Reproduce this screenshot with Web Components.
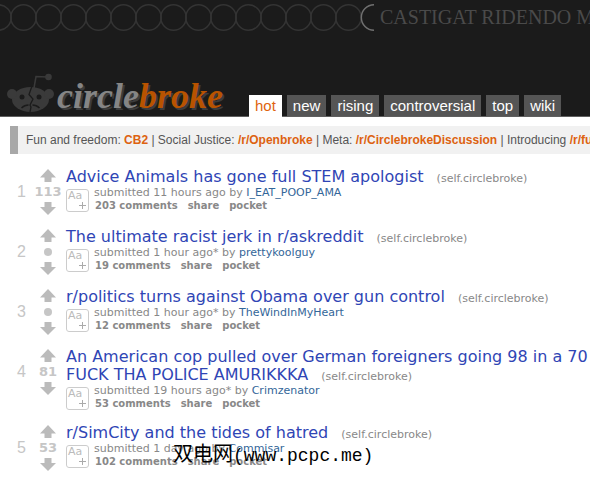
<!DOCTYPE html>
<html lang="en">
<head>
<meta charset="utf-8">
<title>circlebroke</title>
<style>
  body {
    margin: 0;
    background: #fff;
    font-family: "DejaVu Sans", Verdana, sans-serif;
  }
  main {
    position: relative;
    overflow: hidden;
  }
  cb-post:last-of-type { margin-bottom: 0; }
</style>
</head>
<body>
<cb-header>
  <cb-tab selected>hot</cb-tab>
  <cb-tab>new</cb-tab>
  <cb-tab>rising</cb-tab>
  <cb-tab>controversial</cb-tab>
  <cb-tab>top</cb-tab>
  <cb-tab>wiki</cb-tab>
</cb-header>
<main>
  <cb-notice></cb-notice>
  <cb-post rank="1" score="113" age="11 hours ago" author="I_EAT_POOP_AMA" comments="203">Advice Animals has gone full STEM apologist</cb-post>
  <cb-post rank="2" age="1 hour ago*" author="prettykoolguy" comments="19">The ultimate racist jerk in r/askreddit</cb-post>
  <cb-post rank="3" age="1 hour ago*" author="TheWindInMyHeart" comments="12">r/politics turns against Obama over gun control</cb-post>
  <cb-post rank="4" score="81" age="19 hours ago*" author="Crimzenator" comments="53">An American cop pulled over German foreigners going 98 in a 70<br>FUCK THA POLICE AMURIKKKA</cb-post>
  <cb-post rank="5" score="53" age="1 day ago" author="Commisar" comments="102">r/SimCity and the tides of hatred</cb-post>
  <cb-watermark></cb-watermark>
</main>

<script>
// page header: ring banner, logo and the tab menu (tabs come in through the slot)
class CbHeader extends HTMLElement {
  constructor() {
    super();
    this.attachShadow({ mode: 'open' });
    let rings = '';
    for (let cx = -1.5; cx < 360; cx += 25) {
      rings += `<circle cx="${cx}" cy="17.5" r="12.7"/>`;
    }
    this.shadowRoot.innerHTML = `
      <style>
        :host {
          display: block;
          background: #1b1b1b;
          border-bottom: 1px solid #5f5f5f;
        }
        .banner {
          display: flex;
          gap: 6px;
          height: 36px;
          white-space: nowrap;
          overflow: hidden;
          color: #4a4a4a;
          font: 20px/34px "Liberation Serif", serif;
        }
        .banner svg { flex: none; }
        .bar {
          display: flex;
          align-items: flex-end;
          height: 80px;
        }
        .logo {
          display: flex;
          align-items: flex-end;
          flex: none;
          width: 242px;
          padding-left: 7px;
          gap: 2px;
          text-decoration: none;
          color: #858585;
          font: italic bold 36px/40px "Liberation Serif", serif;
          text-shadow: 2px 2px #3c3c3c;
        }
        .logo svg { flex: none; margin-bottom: 3px; }
        .logo b { color: #b85300; }
        nav {
          display: flex;
          gap: 5px;
          margin-bottom: -1px;
        }
      </style>
      <div class="banner">
        <svg width="374" height="36" fill="none" stroke="#343434" stroke-width="1.5">
          ${rings}
          <path d="M374 4.8a12.7 12.7 0 0 0 0 25.4" stroke="#707070"/>
        </svg>
        <span>CASTIGAT RIDENDO M</span>
      </div>
      <div class="bar">
        <a class="logo" href="#">
          <svg width="48" height="40" viewBox="0 0 48 40" aria-hidden="true">
            <g fill="#3a3a3a">
              <ellipse cx="23.5" cy="26.5" rx="18.5" ry="12.5"/>
              <circle cx="5" cy="21" r="5"/>
              <circle cx="42" cy="21" r="5"/>
              <circle cx="41.5" cy="4" r="3.3"/>
            </g>
            <path d="M27 15L29 3.5L41 4" fill="none" stroke="#3a3a3a" stroke-width="1.5"/>
            <path d="M25 13l-3 8.500 4 4.500-3 6 1 2-1 5" fill="none" stroke="#1b1b1b" stroke-width="1.3"/>
            <circle cx="15" cy="24" r="2.5" fill="#1b1b1b"/>
            <circle cx="32" cy="24" r="2.5" fill="#1b1b1b"/>
            <path d="M14.5 35q3-3 7-3M25.5 32q4 0 7 3" fill="none" stroke="#1b1b1b" stroke-width="1.5"/>
          </svg>
          <span>circle<b>broke</b></span>
        </a>
        <nav><slot></slot></nav>
      </div>
    `;
  }
}

class CbTab extends HTMLElement {
  constructor() {
    super();
    this.attachShadow({ mode: 'open' });
    this.shadowRoot.innerHTML = `
      <style>
        :host { display: block; padding-bottom: 1px; }
        :host([selected]) { padding-bottom: 0; }
        a {
          display: block;
          padding: 0 6px;
          background: #555;
          color: #fff;
          font: 15px/21px "Liberation Sans", Arial, sans-serif;
          text-decoration: none;
        }
        :host([selected]) a {
          background: #fff;
          color: #e0640f;
          line-height: 22px;
        }
      </style>
      <a href="#"><slot></slot></a>
    `;
  }
}

class CbNotice extends HTMLElement {
  constructor() {
    super();
    this.attachShadow({ mode: 'open' });
    this.shadowRoot.innerHTML = `
      <style>
        :host {
          display: block;
          margin: 9px 0 13px 10px;
          padding-left: 8px;
          border-left: 8px solid #a8a8a8;
          background: #f1f1f1;
          color: #555;
          font: 12px/28px "Liberation Sans", Arial, sans-serif;
          white-space: nowrap;
          overflow: hidden;
        }
        a {
          color: #dd6210;
          font-weight: bold;
          text-decoration: none;
        }
      </style>
      Fun and freedom: <a href="#">CB2</a> | Social Justice: <a href="#">/r/Openbroke</a> | Meta: <a href="#">/r/CirclebrokeDiscussion</a> | Introducing <a href="#">/r/fu</a>
    `;
  }
}

// one row of the listing, the title is the slotted content
class CbPost extends HTMLElement {
  constructor() {
    super();
    this.attachShadow({ mode: 'open' });
  }

  connectedCallback() {
    const score = this.getAttribute('score');
    this.shadowRoot.innerHTML = `
      <style>
        :host {
          display: flex;
          margin-bottom: 10px;
          color: #888;
          white-space: nowrap;
        }
        a { color: inherit; text-decoration: none; }
        .rank {
          flex: none;
          width: 26px;
          text-align: right;
          color: #c6c6c6;
          font: 16px/50px "Liberation Sans", Arial, sans-serif;
        }
        .votes {
          display: flex;
          flex-direction: column;
          align-items: center;
          flex: none;
          width: 36px;
          padding: 2px 0 0 4px;
          color: #c6c6c6;
          font: bold 13px/18px "DejaVu Sans", Verdana, sans-serif;
        }
        button {
          display: block;
          padding: 0;
          border: 0;
          background: none;
        }
        button svg { display: block; }
        .dot {
          width: 8px;
          height: 8px;
          margin: 5px 0;
          border-radius: 50%;
          background: #c6c6c6;
        }
        .entry { padding: 1px 0 3px; }
        .title {
          color: #2f45b5;
          font-size: 16px;
          line-height: 18px;
        }
        .title .domain {
          margin-left: 8px;
          color: #888;
          font-size: 11px;
          line-height: 12px;
        }
        .details { display: flex; gap: 5px; }
        .expando { margin-top: 2px; }
        .tagline { font-size: 11px; line-height: 14px; }
        .tagline a { color: #369; }
        .links {
          display: flex;
          gap: 10px;
          padding-left: 1px;
          font-size: 10px;
          line-height: 12px;
          font-weight: bold;
        }
      </style>
      <span class="rank">${this.getAttribute('rank')}</span>
      <div class="votes">
        <button aria-label="upvote">
          <svg width="16" height="14"><path d="M8 0l8 8.500h-4.500V13h-7V8.500H0z" fill="#bbb"/></svg>
        </button>
        ${score ? `<span>${score}</span>` : '<span class="dot"></span>'}
        <button aria-label="downvote">
          <svg width="16" height="14"><path d="M8 14l8-8h-4.500V1h-7v5H0z" fill="#bbb"/></svg>
        </button>
      </div>
      <div class="entry">
        <div class="title"><a href="#"><slot></slot></a> <a class="domain" href="#">(self.circlebroke)</a></div>
        <div class="details">
          <button class="expando" aria-label="expand">
            <svg width="23" height="23" fill="none" stroke="#ccc">
              <rect x=".5" y=".5" width="22" height="22" rx="2.5"/>
              <path d="M16.500 13v7M13 16.500h7" stroke="#aaa"/>
              <text x="2" y="10" font-size="11" font-family="DejaVu Sans" fill="#bbb" stroke="none">Aa</text>
            </svg>
          </button>
          <div>
            <div class="tagline">submitted ${this.getAttribute('age')} by <a href="#">${this.getAttribute('author')}</a></div>
            <div class="links">
              <a href="#">${this.getAttribute('comments')} comments</a>
              <a href="#">share</a>
              <a href="#">pocket</a>
            </div>
          </div>
        </div>
      </div>
    `;
  }
}

// site stamp lying over the listing
class CbWatermark extends HTMLElement {
  constructor() {
    super();
    this.attachShadow({ mode: 'open' });
    this.shadowRoot.innerHTML = `
      <style>
        :host {
          position: absolute;
          left: 173px;
          bottom: 5px;
          color: #000;
          font: 18px/24px "Liberation Mono", monospace;
          white-space: nowrap;
        }
        span { font: 20px/24px "Noto Sans CJK SC", sans-serif; }
      </style>
      <span>双电网</span>(www.pcpc.me)
    `;
  }
}

customElements.define('cb-header', CbHeader);
customElements.define('cb-tab', CbTab);
customElements.define('cb-notice', CbNotice);
customElements.define('cb-post', CbPost);
customElements.define('cb-watermark', CbWatermark);
</script>
</body>
</html>
